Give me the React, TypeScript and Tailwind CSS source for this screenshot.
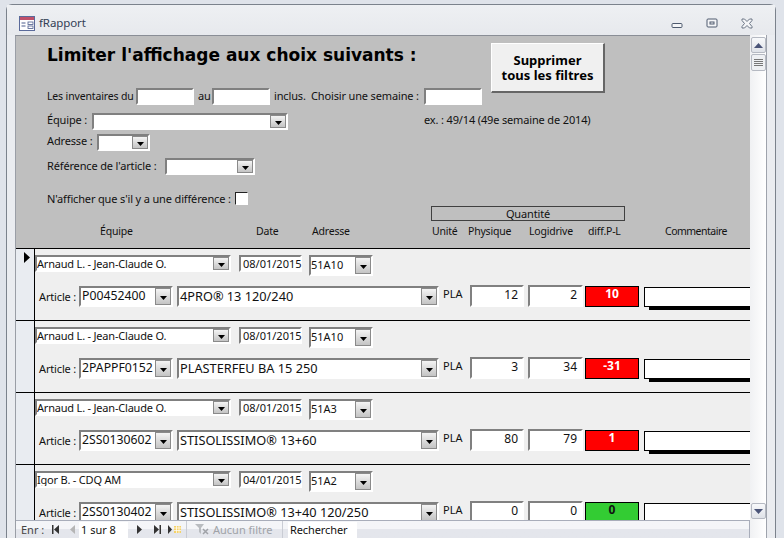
import React from 'react';

const FONT = "font-['Noto_Sans',sans-serif]";

function Arrow({ className = '' }: { className?: string }) {
  return (
    <span className={`flex shrink-0 items-center justify-center border border-[#8a8a8a] bg-gradient-to-b from-[#f4f4f4] to-[#c4c4c4] ${className}`}>
      <svg width="7" height="4" viewBox="0 0 7 4" className="mt-[3px]"><path d="M0 0h7L3.5 4z" fill="#000" /></svg>
    </span>
  );
}

const sunken = 'border-2 border-t-[#808080] border-l-[#808080] border-r-white border-b-white bg-white';

function Combo({ text, className, textClass = 'text-[11px] leading-[13px] tracking-[-0.2px]', btn = 'w-[16px]' }: { text?: string; className: string; textClass?: string; btn?: string }) {
  return (
    <div className={`flex shrink-0 ${sunken} ${className}`}>
      <span className={`flex-1 overflow-hidden whitespace-nowrap text-[#111] ${textClass}`}>{text}</span>
      <Arrow className={btn} />
    </div>
  );
}

function Num({ value, className }: { value: string; className: string }) {
  return (
    <div className={`shrink-0 pr-[4px] text-right text-[12px] leading-[15px] text-[#111] ${sunken} ${className}`}>{value}</div>
  );
}

const rows = [
  { team: 'Arnaud L. - Jean-Claude O.', date: '08/01/2015', addr: '51A10', ref: 'P00452400', label: '4PRO® 13 120/240', phys: '12', logi: '2', diff: '10', ok: false, current: true },
  { team: 'Arnaud L. - Jean-Claude O.', date: '08/01/2015', addr: '51A10', ref: '2PAPPF0152', label: 'PLASTERFEU BA 15 250', phys: '3', logi: '34', diff: '-31', ok: false, current: false },
  { team: 'Arnaud L. - Jean-Claude O.', date: '08/01/2015', addr: '51A3', ref: '2SS0130602', label: 'STISOLISSIMO® 13+60', phys: '80', logi: '79', diff: '1', ok: false, current: false },
  { team: 'Igor B. - CDQ AM', date: '04/01/2015', addr: '51A2', ref: '2SS0130402', label: 'STISOLISSIMO® 13+40 120/250', phys: '0', logi: '0', diff: '0', ok: true, current: false },
];

function Row({ r }: { r: (typeof rows)[number] }) {
  return (
    <div className="flex h-[72px] shrink-0 border-t border-black">
      <div className="flex w-[19px] shrink-0 border-r border-black bg-[#e9ecf1] pl-[8px] pt-[3px]">
        {r.current && (
          <svg width="6" height="11" viewBox="0 0 6 11"><path d="M0 0l6 5.5L0 11z" fill="#000" /></svg>
        )}
      </div>
      <div className="flex-1 overflow-hidden bg-[#efefef]">
        <div className="mt-[6px] flex h-[30px] items-start">
          <Combo text={r.team} className="h-[17px] w-[196px]" />
          <div className="ml-[8px] h-[17px] w-[63px] shrink-0 whitespace-nowrap border-2 border-t-[#808080] border-l-[#808080] border-r-white border-b-white bg-white pl-[2px] text-[11px] leading-[13px] text-[#111]">{r.date}</div>
          <Combo text={r.addr} className="ml-[7px] h-[21px] w-[64px]" textClass="text-[11px] leading-[13px] pt-[1px]" />
        </div>
        <div className="flex h-[22px] items-start">
          <span className="ml-[4px] mt-[4px] w-[40px] shrink-0 whitespace-nowrap text-[11px] leading-[16px] tracking-[-0.15px] text-[#111]">Article :</span>
          <Combo text={r.ref} className="mt-[1px] h-[21px] w-[94px]" textClass="text-[12.25px] leading-[16px] pl-[1px]" />
          <Combo text={r.label} className="ml-[4px] mt-[1px] h-[21px] w-[262px]" textClass="text-[12.75px] leading-[16px] pl-[1px]" />
          <span className="ml-[4px] mt-[1px] w-[27px] shrink-0 text-[11px] leading-[16px] text-[#111]">PLA</span>
          <Num value={r.phys} className="h-[22px] w-[54px]" />
          <Num value={r.logi} className="ml-[4px] h-[22px] w-[55px]" />
          <div className={`ml-[2px] mt-[1px] h-[21px] w-[54px] shrink-0 border border-black text-center text-[12px] font-bold leading-[14px] ${r.ok ? 'bg-[#33cc33] text-[#111]' : 'bg-[#ff0000] text-white'}`}>{r.diff}</div>
          <div className="ml-[5px] mt-[2px] h-[20px] w-[120px] shrink-0 border border-black bg-white shadow-[5px_3px_0_#000]" />
        </div>
      </div>
    </div>
  );
}

function ScrollBtn({ up }: { up: boolean }) {
  return (
    <div className="mx-[1px] flex h-[16px] w-[15px] items-center justify-center rounded-[2px] border border-[#b5b9c2] bg-gradient-to-b from-[#f8f9fb] to-[#dfe2e8]">
      <svg width="9" height="5" viewBox="0 0 9 5"><path d={up ? 'M0 5L4.5 0 9 5z' : 'M0 0h9L4.5 5z'} fill="#4a5478" /></svg>
    </div>
  );
}

export default function App() {
  return (
    <div className={`h-[538px] w-[784px] overflow-hidden bg-[#dfe3ea] pl-[6px] pt-[4px] ${FONT}`}>
      <div className="flex h-[540px] w-[770px] flex-col rounded-t-[6px] border border-b-0 border-[#7b828c] bg-[#eaecf0]">
        <div className="flex h-[30px] shrink-0 items-center bg-gradient-to-b from-[#eef0f3] to-[#e7e9ed] pt-[6px]">
          <svg className="ml-[12px]" width="16" height="15" viewBox="0 0 16 15">
            <rect x="0.5" y="0.5" width="15" height="14" fill="#fff" stroke="#5a6a9a" />
            <rect x="1" y="1" width="14" height="3" fill="#c0506a" />
            <path d="M2.5 7h4M2.5 10h4" stroke="#4a5a8a" />
            <rect x="9" y="6" width="5" height="2.5" fill="none" stroke="#4a5a8a" strokeWidth="0.8" />
            <rect x="9" y="10" width="5" height="2.5" fill="none" stroke="#4a5a8a" strokeWidth="0.8" />
          </svg>
          <span className="ml-[4px] text-[11.5px] tracking-[-0.1px] text-[#333e55]">fRapport</span>
          <div className="ml-auto flex items-center">
            <svg width="12" height="8" viewBox="0 0 12 8" className="mr-[23px] mt-[4px]"><rect x="1" y="2.5" width="10" height="4" rx="1" fill="#f4f5f7" stroke="#4e5a6e" /></svg>
            <svg width="12" height="10" viewBox="0 0 12 10" className="mr-[23px]"><rect x="1" y="1" width="10" height="8" rx="1" fill="#f4f5f7" stroke="#4e5a6e" /><rect x="4" y="4" width="4" height="2" fill="none" stroke="#4e5a6e" /></svg>
            <svg width="12" height="11" viewBox="0 0 12 11" className="mr-[22px]"><path d="M1 1h2.500L6 3.500 8.500 1H11v1.500L8.500 5.500 11 8.500V10H8.500L6 7.500 3.500 10H1V8.500l2.500-3L1 2.500z" fill="#f4f5f7" stroke="#6a7484" /></svg>
          </div>
        </div>
        <div className="flex min-h-0 flex-1">
          <div className="w-[8px] shrink-0 bg-[#eaecf0]" />
          <div className="flex h-[503px] w-[735px] shrink-0 flex-col overflow-hidden border-l border-t border-l-[#9a9ea6] border-t-[#8a8e96]">
            <div className="h-[212px] shrink-0 bg-[#bfbfbf] text-[11px] leading-[14px] tracking-[-0.15px] text-[#111]">
              <div className="flex">
                <div className="w-[475px] shrink-0 pl-[31px]">
                  <h1 className="mt-[7px] h-[24px] whitespace-nowrap font-['DejaVu_Sans',sans-serif] text-[17px] font-bold leading-[24px] tracking-normal text-black">Limiter l'affichage aux choix suivants :</h1>
                  <div className="mt-[21px] flex h-[17px] items-center whitespace-nowrap">
                    <span className="-mt-px w-[89px] shrink-0 text-[10.5px]">Les inventaires du</span>
                    <div className={`h-[17px] w-[58px] shrink-0 ${sunken}`} />
                    <span className="ml-[4px] -mt-px w-[14px] shrink-0">au</span>
                    <div className={`h-[17px] w-[58px] shrink-0 ${sunken}`} />
                    <span className="ml-[4px] -mt-px w-[37px] shrink-0">inclus.</span>
                    <span className="-mt-px w-[113px] shrink-0">Choisir une semaine :</span>
                    <div className={`h-[17px] w-[58px] shrink-0 ${sunken}`} />
                  </div>
                  <div className="mt-[8px] flex h-[16px] items-center whitespace-nowrap">
                    <span className="-mt-[2px] w-[45px] shrink-0">Équipe :</span>
                    <Combo className="h-[17px] w-[196px]" />
                    <span className="-mt-[2px] ml-[136px]">ex. : 49/14 (49e semaine de 2014)</span>
                  </div>
                  <div className="mt-[5px] flex h-[16px] items-center whitespace-nowrap">
                    <span className="-mt-[2px] w-[50px] shrink-0">Adresse :</span>
                    <Combo className="h-[17px] w-[53px]" />
                  </div>
                  <div className="mt-[8px] flex h-[17px] items-center whitespace-nowrap">
                    <span className="-mt-px w-[118px] shrink-0">Référence de l'article :</span>
                    <Combo className="h-[17px] w-[90px]" />
                  </div>
                  <div className="mt-[17px] flex h-[13px] items-center whitespace-nowrap">
                    <span className="w-[188px] shrink-0">N'afficher que s'il y a une différence :</span>
                    <div className="h-[13px] w-[13px] shrink-0 border border-t-[#222] border-l-[#222] border-r-white border-b-white bg-white" />
                  </div>
                </div>
                <button className="mt-[7px] h-[50px] w-[114px] shrink-0 border border-b-2 border-r-2 border-t-white border-l-white border-r-[#666] border-b-[#666] bg-[#f0f0f0] text-center text-[13px] font-bold leading-[15px] tracking-normal text-black">
                  Supprimer<br />tous les filtres
                </button>
              </div>
              <div className="ml-[415px] mt-[1px] flex h-[15px] w-[194px] items-center justify-center border border-[#404040]">Quantité</div>
              <div className="mt-[3px] flex h-[14px] items-center whitespace-nowrap pl-[84px] text-[10.5px] tracking-[-0.2px]">
                <span className="w-[156px] shrink-0">Équipe</span>
                <span className="w-[56px] shrink-0">Date</span>
                <span className="w-[120px] shrink-0">Adresse</span>
                <span className="w-[36px] shrink-0">Unité</span>
                <span className="w-[61px] shrink-0">Physique</span>
                <span className="w-[59px] shrink-0">Logidrive</span>
                <span className="w-[77px] shrink-0">diff.P-L</span>
                <span className="tracking-[-0.5px]">Commentaire</span>
              </div>
            </div>
            <div className="min-h-0 flex-1 overflow-hidden">
              {rows.map((r) => <Row key={r.ref} r={r} />)}
            </div>
            <div className="flex h-[18px] shrink-0 items-center border-r border-t border-[#a8adba] bg-gradient-to-b from-[#f4f5f8] from-50% to-[#e4e6ec] to-50% text-[11px] leading-[16px] text-[#555]">
              <span className="ml-[5px] w-[31px] shrink-0 whitespace-nowrap text-[#444]">Enr :</span>
              <svg width="7" height="9" viewBox="0 0 7 9" className="shrink-0"><path d="M0 0h1.500v9H0zM7 0v9L2 4.500z" fill="#333" /></svg>
              <svg width="6" height="9" viewBox="0 0 6 9" className="ml-[10px] shrink-0"><path d="M6 0v9L1 4.500z" fill="#b5b5b5" /></svg>
              <div className="ml-[4px] h-[16px] w-[49px] shrink-0 whitespace-nowrap bg-white pl-[2px] text-[11px] leading-[16px] text-[#111]">1 sur 8</div>
              <svg width="6" height="9" viewBox="0 0 6 9" className="ml-[9px] shrink-0"><path d="M0 0v9l5-4.500z" fill="#333" /></svg>
              <svg width="7" height="9" viewBox="0 0 7 9" className="ml-[11px] shrink-0"><path d="M0 0v9l5-4.500zM5.500 0H7v9H5.500z" fill="#333" /></svg>
              <svg width="13" height="9" viewBox="0 0 13 9" className="ml-[7px] shrink-0"><path d="M0 0v9l4-4.500z" fill="#333" /><rect x="6" y="1" width="7" height="7" fill="#f4d26a" /><path d="M6 3h7M6 5.500h7M8.500 1v7M11 1v7" stroke="#fff" strokeWidth="0.7" /></svg>
              <span className="ml-[5px] h-[18px] w-px shrink-0 bg-[#c9ccd4]" />
              <svg width="14" height="13" viewBox="0 0 14 13" className="ml-[8px] shrink-0"><path d="M0 1h9L6 5v6L4 9V5z" fill="#b9bcc0" /><path d="M8 6l5 5M13 6l-5 5" stroke="#a0a3a8" strokeWidth="1.500" /></svg>
              <span className="ml-[4px] w-[69px] shrink-0 whitespace-nowrap text-[#a0a3a8]">Aucun filtre</span>
              <span className="h-[18px] w-px shrink-0 bg-[#c9ccd4]" />
              <div className="ml-[5px] h-[16px] w-[69px] shrink-0 whitespace-nowrap bg-white pl-[2px] text-[11px] leading-[16px] tracking-[-0.1px] text-[#111]">Rechercher</div>
            </div>
          </div>
          <div className="flex h-[503px] w-[17px] shrink-0 flex-col items-start border-r border-[#9ea3ac] bg-gradient-to-r from-[#f0f1f3] to-white pt-[2px]">
            <ScrollBtn up />
            <div className="mx-[1px] mt-px flex h-[17px] w-[15px] flex-col items-center justify-center gap-[1px] rounded-[2px] border border-[#b5b9c2] bg-[#eef0f3]">
              <span className="h-px w-[9px] bg-[#777]" />
              <span className="h-px w-[9px] bg-[#777]" />
              <span className="h-px w-[9px] bg-[#777]" />
              <span className="h-px w-[9px] bg-[#777]" />
            </div>
            <div className="flex-1" />
            <ScrollBtn up={false} />
            <div className="h-[19px]" />
          </div>
          <div className="w-[8px] shrink-0" />
        </div>
      </div>
    </div>
  );
}
